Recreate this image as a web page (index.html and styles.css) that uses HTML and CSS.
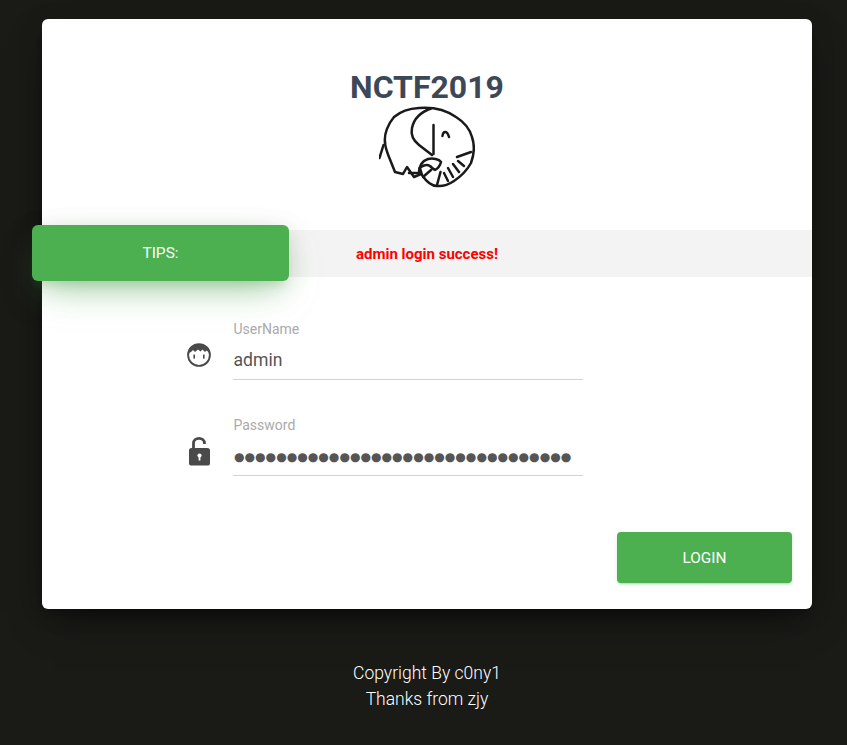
FILE: index.html
```html
<!DOCTYPE html>
<html lang="en">
<head>
<meta charset="utf-8">
<title>NCTF2019</title>
<link rel="stylesheet" href="styles.css">
</head>
<body>
<main class="card">
  <header class="head">
    <h1 class="title">NCTF2019</h1>
    <svg class="logo" width="96" height="82" viewBox="380 106 96 82" fill="none" stroke="#1a1a1a" stroke-width="2.5" stroke-linecap="round" stroke-linejoin="round">
      <path d="M380.5 158 L384.5 145"/>
      <path d="M386 142 C385 134 389 124 395 117 C402 111 411 108.5 420 108 C433 107 447 110 457 117 C465 122 471 130 473 137 C476 146 475 155 472 163 C467 172 461 177 455 181 C449 185 443 186.5 438 186 C432 186 427 181 423 175 L421 168"/>
      <path d="M386 142 C386 147 388 152 390 157 L396 172 L404 174 L408 167 L415 177 L422 174"/>
      <path d="M432 108.5 C422 112 415 118 413 128 C411.5 135 415 141 420 145 L433 155"/>
      <path d="M434.5 125 L434.5 154"/>
      <path d="M443.5 136 C444 131 448 130 450 137"/>
      <path d="M410 173 L420 173 C420 166 423 161 429 159 C434 158 440 159 442 162 C441 166 438 169 436 170 C434 169 432 167 431 166 C428 164 425 165 422 167"/>
      <path d="M424 177 L432 170"/>
      <path d="M438 185 L441.5 172"/>
      <path d="M449 181 L445 173"/>
      <path d="M454 177 L449 168"/>
      <path d="M460 172 L454 164"/>
      <path d="M465 166 L459 161"/>
      <path d="M458 157 L472 152"/>
    </svg>
  </header>
  <section class="tips">
    <div class="tips-label">TIPS:</div>
    <p class="tips-msg">admin login success!</p>
  </section>
  <form class="form">
    <div class="row">
      <svg class="icon" width="26" height="26" viewBox="0 0 26 26">
        <circle cx="13" cy="13" r="10.9" fill="#fff" stroke="#4a4a4a" stroke-width="1.9"/>
        <path d="M2.5 11 C3.5 5 8 2 13 2 C19 2 23 6 23.6 11 L20.5 8.5 L19 10 L16.5 7.5 L14.5 9.5 L12 7.5 L9 10 L7 8 L5 10 Z" fill="#4a4a4a"/>
        <rect x="7.4" y="12.6" width="1.6" height="4" fill="#4a4a4a"/>
        <rect x="17" y="12.6" width="1.6" height="4" fill="#4a4a4a"/>
      </svg>
      <div class="field">
        <label class="label">UserName</label>
        <div class="value">admin</div>
      </div>
    </div>
    <div class="row">
      <svg class="icon icon-lock" width="24" height="30" viewBox="0 0 24 30">
        <path d="M5.5 12 V6.5 C5.5 -0.3 16.5 -0.3 16.5 6.5 V7" fill="none" stroke="#4a4a4a" stroke-width="2.8"/>
        <rect x="1" y="11" width="21" height="17.5" rx="2.6" fill="#4a4a4a"/>
        <circle cx="11.5" cy="18.5" r="2.1" fill="#fff"/>
        <rect x="10.6" y="19" width="1.8" height="4.5" fill="#fff"/>
      </svg>
      <div class="field">
        <label class="label">Password</label>
        <div class="value dots">●●●●●●●●●●●●●●●●●●●●●●●●●●●●●●●●</div>
      </div>
    </div>
    <div class="actions">
      <button class="btn" type="button">LOGIN</button>
    </div>
  </form>
</main>
<footer class="foot">
  <p>Copyright By c0ny1</p>
  <p>Thanks from zjy</p>
</footer>
</body>
</html>
```

FILE: styles.css
```css
* { box-sizing: border-box; }
html, body { margin: 0; padding: 0; }
body {
  height: 745px;
  overflow: hidden;
  background: #1a1a17;
  font-family: Roboto, sans-serif;
  padding-top: 19px;
}
.card {
  width: 770px;
  height: 590px;
  margin-left: 42px;
  background: #fff;
  border-radius: 6px;
  box-shadow: 0 16px 38px -12px rgba(0,0,0,.56), 0 4px 25px 0 rgba(0,0,0,.12), 0 8px 10px -5px rgba(0,0,0,.2);
  display: flex;
  flex-direction: column;
}
.head {
  display: flex;
  flex-direction: column;
  align-items: center;
  padding-top: 49px;
  height: 211px;
}
.title {
  margin: 0;
  font-size: 32px;
  line-height: 38px;
  font-weight: 700;
  color: #3c4858;
}
.logo { display: block; }
.tips {
  display: flex;
  align-items: center;
  height: 47px;
  background: #f3f3f3;
}
.tips-label {
  flex: none;
  width: 257px;
  height: 56px;
  margin: -5px 0 -4px -10px;
  display: flex;
  align-items: center;
  justify-content: center;
  background: #4caf50;
  color: #fff;
  font-size: 15.5px;
  border-radius: 6px;
  box-shadow: 0 16px 38px -12px rgba(76,175,80,.56), 0 4px 25px 0 rgba(0,0,0,.12), 0 8px 10px -5px rgba(76,175,80,.2);
}
.tips-msg {
  margin: 0 0 0 67px;
  font-size: 15px;
  font-weight: 700;
  color: #f00;
}
.form {
  flex: 1;
  display: flex;
  flex-direction: column;
  padding-top: 43px;
}
.row {
  display: flex;
  align-items: flex-end;
  height: 60px;
  margin-bottom: 36px;
  margin-left: 144px;
}
.icon { flex: none; margin: 0 21px 12px 0; display: block; }
.icon-lock { margin: 0 21px 9px 2px; }
.field {
  width: 350px;
  height: 60px;
  border-bottom: 1px solid #d2d2d2;
  display: flex;
  flex-direction: column;
}
.label {
  font-size: 14px;
  line-height: 18px;
  padding-left: 0.5px;
  color: #aaa;
}
.value {
  margin-top: 10px;
  font-size: 17.6px;
  line-height: 24px;
  padding-left: 0.5px;
  color: #555;
}
.dots {
  margin-top: 11px;
  padding-left: 1px;
  font-family: "DejaVu Sans", sans-serif;
  font-size: 12.08px;
  white-space: nowrap;
  overflow: hidden;
}
.actions {
  display: flex;
  justify-content: flex-end;
  padding: 20px 20px 0 0;
}
.btn {
  width: 175px;
  height: 51px;
  border: 0;
  border-radius: 4px;
  background: #4caf50;
  color: #fff;
  font: 400 15.4px Roboto, sans-serif;
  box-shadow: 0 2px 2px 0 rgba(76,175,80,.14), 0 3px 1px -2px rgba(76,175,80,.2), 0 1px 5px 0 rgba(76,175,80,.12);
}
.foot {
  width: 770px;
  margin: 51px 0 0 42px;
  text-align: center;
  color: #fff;
  font-size: 17.5px;
  font-weight: 300;
  line-height: 26px;
}
.foot p { margin: 0; }
```
